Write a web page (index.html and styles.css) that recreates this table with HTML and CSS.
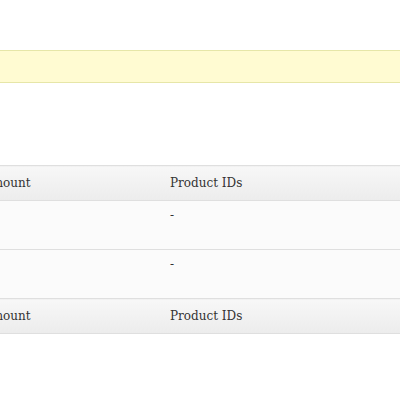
FILE: index.html
```html
<!DOCTYPE html>
<html lang="en">
<head>
    <meta charset="UTF-8">
    <title>Coupons</title>
    <link rel="stylesheet" href="styles.css">
</head>
<body>
    <div class="wrap">
        <div class="notice"></div>
        <table class="coupons">
            <thead>
                <tr>
                    <th class="col-amount">Amount</th>
                    <th>Product IDs</th>
                </tr>
            </thead>
            <tbody>
                <tr>
                    <td class="col-amount"></td>
                    <td>-</td>
                </tr>
                <tr>
                    <td class="col-amount"></td>
                    <td>-</td>
                </tr>
            </tbody>
            <tfoot>
                <tr>
                    <th class="col-amount">Amount</th>
                    <th>Product IDs</th>
                </tr>
            </tfoot>
        </table>
    </div>
</body>
</html>
```

FILE: styles.css
```css
body {
    margin: 0;
    padding: 0;
    background: #fff;
    font-family: "DejaVu Serif", "Liberation Serif", serif;
    color: #333;
    overflow: hidden;
}
.wrap {
    margin-left: -25px;
    padding-top: 50px;
    width: 460px;
}
.notice {
    height: 31px;
    background-color: #fffbd2;
    border-top: 1px solid #e6e6a8;
    border-bottom: 1px solid #e6e6a8;
    margin-bottom: 82px;
}
.coupons {
    width: 100%;
    border-collapse: collapse;
    font-size: 12px;
}
.coupons th {
    text-align: left;
    font-weight: normal;
    height: 34px;
    padding: 0 0 0 8px;
    background: linear-gradient(#f7f7f7, #ececec);
    border-top: 1px solid #dfdfdf;
    border-bottom: 1px solid #dfdfdf;
}
.coupons td {
    height: 49px;
    padding: 7px 0 0 8px;
    vertical-align: top;
    background: #fbfbfb;
    border-top: 1px solid #fff;
    border-bottom: 1px solid #dfdfdf;
    box-sizing: border-box;
}
.coupons tbody tr:last-child td {
    border-bottom: none;
}
.col-amount {
    width: 179px;
}
```
